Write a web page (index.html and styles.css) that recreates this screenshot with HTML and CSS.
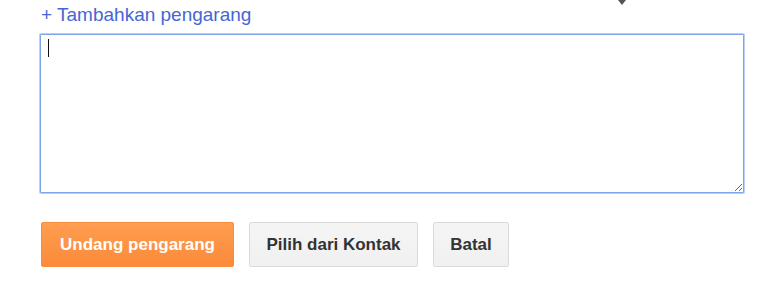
FILE: index.html
```html
<!DOCTYPE html>
<html lang="id">
<head>
<meta charset="utf-8">
<link rel="stylesheet" href="styles.css">
</head>
<body>
<div class="page">
  <svg class="pointer" width="10" height="6" viewBox="0 0 10 6"><path d="M1 0h8L5 5z" fill="#555"/></svg>
  <a class="add-link" href="#">+ Tambahkan pengarang</a>
  <div class="field">
    <textarea class="input" aria-label="Pengarang"></textarea>
    <span class="caret"></span>
  </div>
  <div class="actions">
    <button class="btn btn-primary">Undang pengarang</button>
    <button class="btn btn-contacts">Pilih dari Kontak</button>
    <button class="btn btn-cancel">Batal</button>
  </div>
</div>
</body>
</html>
```
FILE: styles.css
```css
html, body {
  margin: 0;
  padding: 0;
  background: #fff;
}
body {
  font-family: "Liberation Sans", Arial, sans-serif;
}
.page {
  position: relative;
  width: 758px;
  height: 291px;
  padding: 3px 0 0 40px;
  box-sizing: border-box;
}
.pointer {
  position: absolute;
  left: 617px;
  top: 0;
}
.add-link {
  display: block;
  margin-left: 1px;
  font-size: 19px;
  line-height: 24px;
  color: #4566d4;
  text-decoration: none;
}
.field {
  position: relative;
  margin-top: 7px;
  width: 704px;
  height: 159px;
}
.input {
  display: block;
  width: 100%;
  height: 100%;
  box-sizing: border-box;
  margin: 0;
  border: 1px solid #7ea4ec;
  box-shadow: 0 0 0 1px #b9cff5;
  border-radius: 1px;
  resize: both;
  outline: none;
  font-family: inherit;
  font-size: 14px;
}
.caret {
  position: absolute;
  left: 8px;
  top: 5px;
  width: 1px;
  height: 18px;
  background: #111;
}
.actions {
  display: flex;
  gap: 15px;
  margin-top: 29px;
  margin-left: 1px;
}
.btn {
  height: 45px;
  padding: 0;
  border: 1px solid #dadada;
  border-radius: 2px;
  background: linear-gradient(#f5f5f5, #f0f0f0);
  color: #333;
  font-family: "Liberation Sans", Arial, sans-serif;
  font-weight: bold;
  font-size: 17px;
}
.btn-primary {
  width: 193px;
  border-color: #f68c3e;
  background: linear-gradient(#ff9d50, #fb8a39);
  color: #fff;
}
.btn-contacts {
  width: 169px;
}
.btn-cancel {
  width: 76px;
}
```
